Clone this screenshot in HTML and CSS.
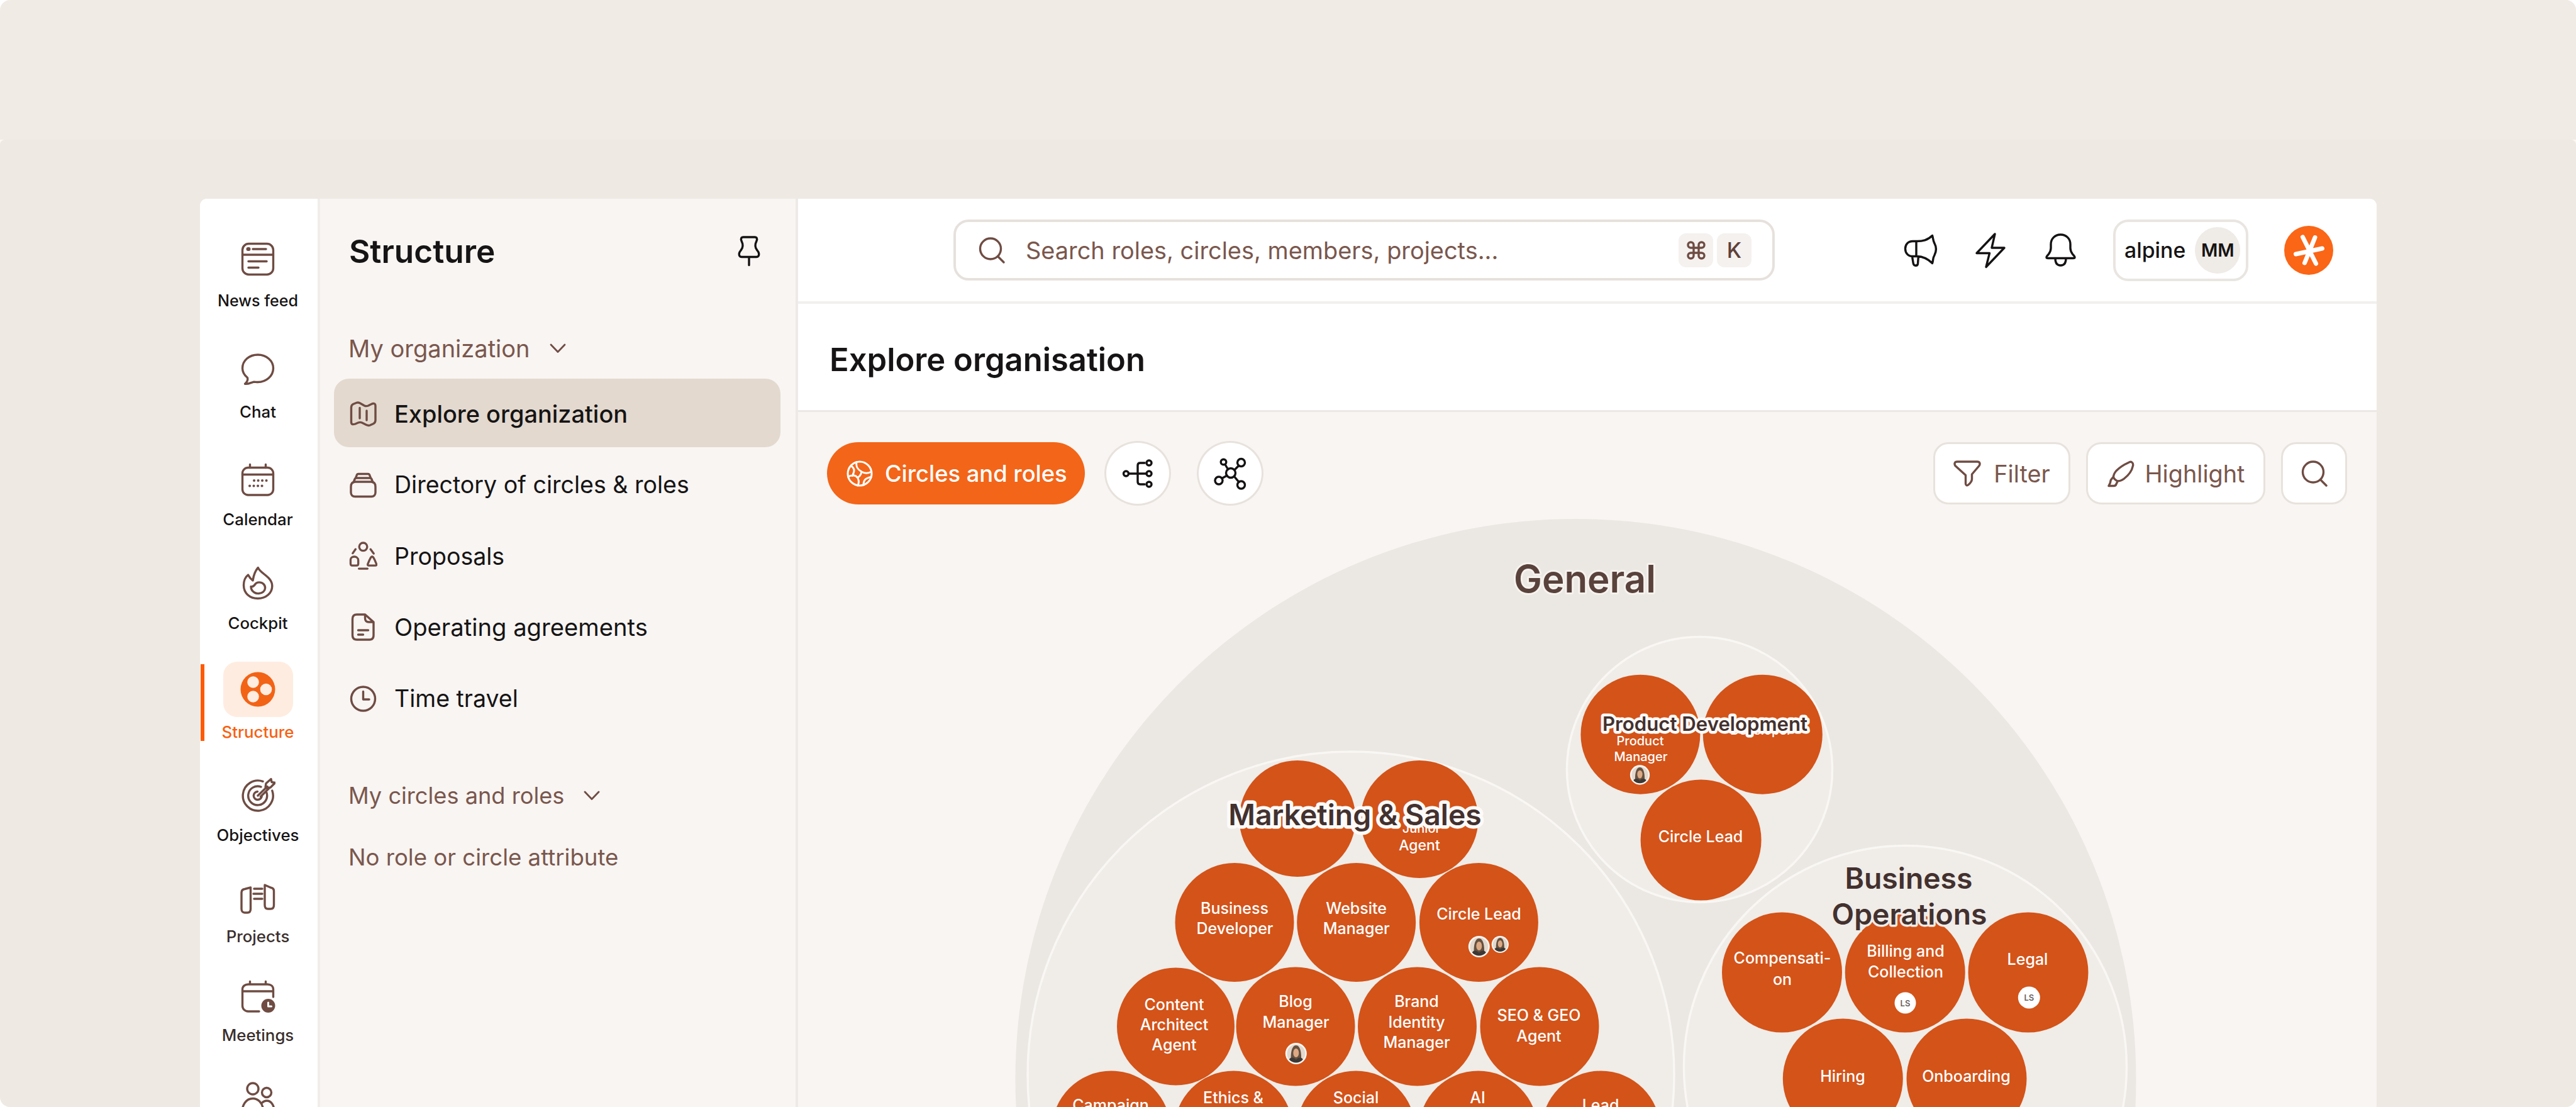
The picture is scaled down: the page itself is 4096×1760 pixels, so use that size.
FILE: index.html
```
<!DOCTYPE html>
<html lang="en">
<head>
    <meta charset="UTF-8">
    <meta name="viewport" content="width=device-width, initial-scale=1.0">
    <title>Explore organisation</title>
    <link rel="stylesheet" href="styles.css">
</head>
<body>
<div class="page">
    <div class="stage">
        <div class="app">

            <!-- icon rail -->
            <nav class="rail">
                <a class="rail-item">
                    <svg class="icon" width="56" height="56" viewBox="0 0 56 56"><rect x="3.500" y="3.500" width="49" height="49" rx="10"/><path d="M3.500 21h49M20 12h21M13 31.500h29M13 41.500h16"/><path class="thick" d="M12.500 12h1"/></svg>
                    <span>News feed</span>
                </a>
                <a class="rail-item">
                    <svg class="icon" width="56" height="56" viewBox="0 0 56 56"><path d="M11.500 40.500C6 36 3.500 31 3.500 25.500 3.500 13 14.500 4 28 4s24.500 9.500 24.500 21.500S41.500 47.500 28 47.500c-3 0-5-.5-7-.2-4 .8-8 3.700-13.500 2.900 3-2.500 5-6.200 4-9.700z"/></svg>
                    <span>Chat</span>
                </a>
                <a class="rail-item">
                    <svg class="icon" width="56" height="56" viewBox="0 0 56 56"><rect x="3.500" y="8.500" width="49" height="43.500" rx="9"/><path d="M3.500 19.500h49M15.500 3.500v5M40.500 3.500v5"/><path class="dots" d="M22 29h22M15 37.500h22"/></svg>
                    <span>Calendar</span>
                </a>
                <a class="rail-item">
                    <svg class="icon" width="56" height="56" viewBox="0 0 56 56"><path d="M28.300 3.500c3 9 22.500 14.500 22.500 29C50.800 44 41 52.500 28 52.500S5.500 44 5.500 31.500c0-7 2.500-13 7-16.500 2 4 4.500 6.500 7.500 9 1-7 3-14.500 8.300-20.500z"/><path d="M17 33.500c3 1 5-1 7-4s9-4 13 0 3 9.500-.5 12.500-10 3.500-14 1-5.500-5.500-5.500-9.500z"/></svg>
                    <span>Cockpit</span>
                </a>
                <a class="rail-item active">
                    <div class="tile">
                        <svg width="56" height="56" viewBox="0 0 56 56"><circle cx="28" cy="28" r="27.500" fill="#f26316"/><g fill="#ffece0"><circle cx="20.500" cy="16.500" r="9.300"/><circle cx="41" cy="28" r="9.300"/><circle cx="20.500" cy="39.500" r="9.300"/></g></svg>
                    </div>
                    <span>Structure</span>
                </a>
                <a class="rail-item">
                    <svg class="icon" width="56" height="56" viewBox="0 0 56 56"><path d="M36 6.300A24 24 0 1 0 50.800 21"/><path d="M33 15A15 15 0 1 0 41.800 24"/><path d="M27.500 22.500A6.500 6.500 0 1 0 34.300 29"/><path d="M28 29L43 14.500M32.500 30.500L46 17M40 16l1-6.500 8-7 1 5 5.500 1-7.500 7.500-7 1z"/></svg>
                    <span>Objectives</span>
                </a>
                <a class="rail-item">
                    <svg class="icon" width="56" height="56" viewBox="0 0 56 56"><path d="M2 18c0-3 2-5 5-5.500L16.500 10v34c0 4-2 6-5 6H7c-3 0-5-2-5-6zM39 6l9 4c3 .5 5.500 2.500 5.500 5.500V38c0 4-2 6-5 6H44c-3 0-5-2-5-6z"/><path d="M22 12h13M21 20h14M22 28h13"/></svg>
                    <span>Projects</span>
                </a>
                <a class="rail-item">
                    <svg class="icon" width="56" height="56" viewBox="0 0 56 56"><path d="M30 51H12.500c-5 0-9-4-9-9V16c0-5 4-8 9-8h31c5 0 9 3 9 8v12M3.500 19h49M15.500 3.500V8M40.500 3.500V8"/><circle class="solid" cx="44.500" cy="42" r="11"/><path class="hand" d="M44.500 37v6h5"/></svg>
                    <span>Meetings</span>
                </a>
                <a class="rail-item">
                    <svg class="icon" width="56" height="56" viewBox="0 0 56 56"><circle cx="20" cy="15" r="9"/><circle cx="42" cy="21" r="7.500"/><path d="M2.500 56c0-16 7-25.500 17.500-25.500 8 0 14.500 6 16.500 16.500M35 37c2-2 4.500-3 7-3 7 0 12 7 12 17"/></svg>
                </a>
            </nav>

            <!-- structure sidebar -->
            <aside class="sidebar">
                <div class="sidebar-header">
                    <h2>Structure</h2>
                    <svg class="icon dark" width="50" height="50" viewBox="0 0 50 50"><path d="M16 3h18c3.500 0 4.500 3 3 6-3 6-3 10.500 1 15 2.500 3 3.500 5 2.500 8-.5 1.500-2 2.500-4 2.500h-23c-2 0-3.500-1-4-2.500-1-3 0-5 2.500-8 4-4.500 4-9 1-15-1.500-3-.5-6 3-6zM25 35v12.500"/></svg>
                </div>
                <div class="section-title">
                    <span>My organization</span>
                    <svg class="icon thin" width="26" height="26" viewBox="0 0 26 26"><path d="M2 7l11 11.500L24 7"/></svg>
                </div>
                <ul class="menu">
                    <li class="selected">
                        <svg class="icon" width="44" height="44" viewBox="0 0 44 44"><path d="M3 12c0-3 1-4.500 3-5.500l5-2c2.500-1 4-.5 6 .5l7 4c2 1 3.500 1 6 0l5-2.500c4-2 6.500-1 6.500 3V32c0 3-1 4.500-3 5.500l-5.500 2.500c-2.500 1-4 .5-6-.5l-7-3.500c-2-1-3.500-1-6 0l-4.500 2C5 39.500 3 38.500 3 35zM16.500 12.500v16.500M27.500 17v15"/></svg>
                        <span>Explore organization</span>
                    </li>
                    <li>
                        <svg class="icon" width="44" height="44" viewBox="0 0 44 44"><path d="M9.500 17h25c4.500 0 7 3 7 8v9c0 4-2.500 6.500-6.500 6.500H9c-4 0-6.500-2.500-6.500-6.500v-9c0-5 2.500-8 7-8zM6.500 18l2-5c.5-1.500 1.500-2 3-2h21c1.500 0 2.500.5 3 2l2 5M10 11l1.500-4c.5-2 1.500-2.500 3-2.500h15c1.500 0 2.500.5 3 2.500L34 11"/></svg>
                        <span>Directory of circles &amp; roles</span>
                    </li>
                    <li>
                        <svg class="icon" width="46" height="46" viewBox="0 0 46 46"><circle cx="23" cy="8" r="6.500"/><path d="M2.500 29c0-3 3-5 6-5s6.500 2 6.500 6v5.500c0 2-1 3-3 3H5c-1.500 0-2.500-1-2.500-3zM37.500 24c2 0 3 3 4.500 6l2.500 6c.5 1.500 0 2.500-2 2.500h-10c-2 0-2.500-1-2-2.500l2.500-6c1.500-3 2.500-6 4.500-6zM10.500 12L6 18.500M35 12l5 7M16 43.500h14"/></svg>
                        <span>Proposals</span>
                    </li>
                    <li>
                        <svg class="icon" width="44" height="44" viewBox="0 0 44 44"><path d="M12 2h13l13.500 12v21c0 4.500-2 7-6.500 7H12c-4.500 0-7-2.500-7-7V9c0-4.500 2.500-7 7-7zM25 2v6c0 4 2 6 6 6h7.500M14 27h16M14 34h8"/></svg>
                        <span class="wide">Operating agreements</span>
                    </li>
                    <li>
                        <svg class="icon" width="44" height="44" viewBox="0 0 44 44"><circle cx="22" cy="22" r="19"/><path d="M22 10.500V23h9.500"/></svg>
                        <span>Time travel</span>
                    </li>
                </ul>
                <div class="section-title second">
                    <span>My circles and roles</span>
                    <svg class="icon thin" width="26" height="26" viewBox="0 0 26 26"><path d="M2 7l11 11.500L24 7"/></svg>
                </div>
                <p class="empty-note">No role or circle attribute</p>
            </aside>

            <!-- main column -->
            <main class="main">
                <header class="topbar">
                    <div class="search">
                        <svg class="icon" width="44" height="44" viewBox="0 0 44 44"><circle cx="20" cy="19.500" r="16.500"/><path d="M31.500 31.500L41 41"/></svg>
                        <span class="placeholder">Search roles, circles, members, projects...</span>
                        <span class="key"><svg class="icon" width="32" height="32" viewBox="0 0 32 32"><path d="M12 12h8v8h-8zM12 12H7.500A4.500 4.500 0 1 1 12 7.500zM20 12V7.500a4.500 4.500 0 1 1 4.500 4.500zM20 20h4.500a4.500 4.500 0 1 1-4.500 4.500zM12 20v4.500A4.500 4.500 0 1 1 7.500 20z"/></svg></span>
                        <span class="key">K</span>
                    </div>
                    <div class="actions">
                        <svg class="icon dark" width="60" height="60" viewBox="0 0 60 60"><path d="M23 15.500h-5.500C10 15.500 5.500 20.500 5.500 27.500S10 39.500 17.500 39.500H23c9.500 0 17 2.500 25.500 11 1.500-4 .5-8 3.500-13 3-6 3-13 0-18.500-2.500-4-2-8-3.500-12.500C41 14 33 15.500 23 15.500v24M16.500 40l1.700 10.500c.8 5 6.800 5 7.300.5l.8-10.500"/></svg>
                        <svg class="icon dark" width="60" height="60" viewBox="0 0 60 60"><path d="M37 4L8 34.500h20.500L23 56.500l29-30.500H32z"/></svg>
                        <svg class="icon dark" width="60" height="60" viewBox="0 0 60 60"><path d="M30.500 5c-9 0-15.500 6.500-15.500 15.500v6c0 4.500-1 6-3.500 9.500-2 2.500-3.500 3.500-3.500 5 0 1 1 1.500 2.500 1.500h40c1.500 0 2.500-.5 2.500-1.500 0-1.500-1.500-2.500-3.500-5C47 32.500 46 31 46 26.500v-6C46 11.500 39.500 5 30.500 5zM22 42.500C22 50 25 54 30.500 54S39 50 39 42.500"/></svg>
                    </div>
                    <div class="workspace">
                        <span>alpine</span>
                        <span class="initials">MM</span>
                    </div>
                    <svg class="logo" width="78" height="78" viewBox="0 0 78 78"><circle cx="39" cy="39" r="39" fill="#fb6516"/><path d="M29.500 18l21 42M49 18.500L32.500 59M18.500 45l42-9" fill="none" stroke="#fff" stroke-width="7" stroke-linecap="round"/></svg>
                </header>
                <div class="titlebar">
                    <h1>Explore organisation</h1>
                </div>

                <section class="canvas">
                    <!-- circle map, drawn behind the toolbar -->
                    <svg class="map" viewBox="1269 655 2510 1105">
                        <defs>
                            <g id="photo">
                                <circle r="17" fill="#fbf7f3"/>
                                <circle r="14.500" fill="#e3d8cd"/>
                                <path d="M-8 12C-9 0-7-13 0-13S9 0 8 12z" fill="#66503f"/>
                                <ellipse cy="-1" rx="4.500" ry="7" fill="#dba984"/>
                                <path d="M-11 9.500C-9 5-3 6 0 10c3-4 9-5 11-.5C8 13 4 14.500 0 14.500S-8 13-11 9.500z" fill="#3c3836"/>
                            </g>
                        </defs>

                        <circle class="root" cx="2505.500" cy="1716" r="891"/>
                        <circle class="group" cx="2702.500" cy="1223.500" r="211"/>
                        <circle class="group" cx="3029.500" cy="1696.500" r="352"/>
                        <circle class="group" cx="2148" cy="1709" r="514"/>

                        <g class="roles">
                            <!-- product development -->
                            <circle cx="2608.400" cy="1167.700" r="95"/>
                            <circle cx="2802.800" cy="1167.700" r="95"/>
                            <circle cx="2704.600" cy="1335.500" r="96"/>
                            <!-- business operations -->
                            <circle cx="2833.500" cy="1546" r="95.500"/>
                            <circle cx="3029.200" cy="1546" r="95.500"/>
                            <circle cx="3225" cy="1546" r="95.500"/>
                            <circle cx="2930.300" cy="1715" r="95.500"/>
                            <circle cx="3127" cy="1715" r="95.500"/>
                            <!-- marketing & sales -->
                            <circle cx="2063" cy="1301.500" r="92.500"/>
                            <circle cx="2257" cy="1302.500" r="93.500"/>
                            <circle cx="1963" cy="1466.500" r="94.500"/>
                            <circle cx="2156.700" cy="1466.500" r="94.500"/>
                            <circle cx="2351.400" cy="1466.500" r="94.500"/>
                            <circle cx="1869.500" cy="1632" r="93.500"/>
                            <circle cx="2060" cy="1632" r="94.500"/>
                            <circle cx="2253.500" cy="1632" r="94.500"/>
                            <circle cx="2448" cy="1632" r="94.500"/>
                            <circle cx="1767" cy="1797" r="94.500"/>
                            <circle cx="1961.500" cy="1797" r="94.500"/>
                            <circle cx="2156" cy="1797" r="94.500"/>
                            <circle cx="2350.500" cy="1797" r="94.500"/>
                            <circle cx="2545.500" cy="1797" r="94.500"/>
                        </g>

                        <g class="labels">
                            <g class="small">
                                <text x="2608" y="1185">Product</text>
                                <text x="2609" y="1210">Manager</text>
                                <text x="2800" y="1168">Developer</text>
                                <text x="2260" y="1324">Junior</text>
                            </g>
                            <text x="2257" y="1351.500" class="mid">Agent</text>
                            <text x="2704" y="1339">Circle Lead</text>

                            <text x="2834" y="1532">Compensati-</text>
                            <text x="2834" y="1565.500">on</text>
                            <text x="3030" y="1521">Billing and</text>
                            <text x="3030" y="1553.500">Collection</text>
                            <text x="3224" y="1534">Legal</text>
                            <text x="2930" y="1720">Hiring</text>
                            <text x="3126.500" y="1720">Onboarding</text>

                            <text x="1963" y="1452.800">Business</text>
                            <text x="1963.500" y="1485">Developer</text>
                            <text x="2156.700" y="1452.800">Website</text>
                            <text x="2156.700" y="1485">Manager</text>
                            <text x="2351.500" y="1462">Circle Lead</text>
                            <text x="1867" y="1605.500">Content</text>
                            <text x="1867" y="1637.700">Architect</text>
                            <text x="1867" y="1670">Agent</text>
                            <text x="2060" y="1601">Blog</text>
                            <text x="2060.500" y="1634">Manager</text>
                            <text x="2252.500" y="1601">Brand</text>
                            <text x="2252.500" y="1633.500">Identity</text>
                            <text x="2252.500" y="1666">Manager</text>
                            <text x="2447" y="1622.500">SEO &amp; GEO</text>
                            <text x="2447" y="1655.500">Agent</text>
                            <text x="1766" y="1765.500">Campaign</text>
                            <text x="1961" y="1753.500">Ethics &amp;</text>
                            <text x="2156" y="1753.500">Social</text>
                            <text x="2349.500" y="1753.500">AI</text>
                            <text x="2545" y="1765.500">Lead</text>
                        </g>

                        <use href="#photo" transform="translate(2607.500 1232) scale(.92)"/>
                        <use href="#photo" transform="translate(2351.800 1505)"/>
                        <use href="#photo" transform="translate(2385.300 1501.500) scale(.8)"/>
                        <use href="#photo" transform="translate(2060.800 1675)"/>
                        <g class="badges">
                            <circle cx="3029.500" cy="1594.500" r="17"/>
                            <circle cx="3226.300" cy="1586" r="17.500"/>
                            <text x="3029.500" y="1599.500">LS</text>
                            <text x="3226.300" y="1591">LS</text>
                        </g>

                        <g class="headings">
                            <text class="general" x="2520" y="942">General</text>
                            <text class="product" x="2711" y="1162">Product Development</text>
                            <text x="2154.500" y="1311.500">Marketing &amp; Sales</text>
                            <text class="plain" x="3035" y="1412.500">Business</text>
                            <text class="plain" x="3036" y="1470">Operations</text>
                        </g>
                    </svg>

                    <div class="toolbar">
                        <button class="pill">
                            <svg width="44" height="44" viewBox="0 0 44 44"><circle cx="22" cy="22" r="19"/><path d="M17 3.500c-1.500 8 2 12 8 15.500 5 3 10 3 15.500 0M3.500 27c6-3.500 12-3 15 1.500 2.500 4 2.500 8 .5 12.500M18.500 28.500c3.500-2 5.500-5 6.500-9.500M8 9.500c4 2.500 6 6 4.500 10.500-.8 2.500-1.500 4-2 5.500M28 40c0-4 1-8 4.500-10s5-2.500 7.500-2.500"/></svg>
                            <span>Circles and roles</span>
                        </button>
                        <button class="round">
                            <svg class="icon dark" width="50" height="50" viewBox="0 0 50 50"><circle cx="6.500" cy="25" r="4"/><circle cx="43" cy="8" r="4"/><circle cx="43" cy="25" r="4"/><circle cx="43" cy="42" r="4"/><path d="M11 25h28M36 8h-7c-3 0-4 1.500-4 4v26c0 2.500 1 4 4 4h7"/></svg>
                        </button>
                        <button class="round second">
                            <svg class="icon dark" width="54" height="54" viewBox="0 0 54 54"><circle cx="28" cy="26" r="7.500"/><circle cx="16.500" cy="8.500" r="4.300"/><circle cx="44.500" cy="9.500" r="6"/><circle cx="9" cy="38" r="6"/><circle cx="44.500" cy="45" r="6"/><path d="M19 12.500l4.500 7.500M40.500 14.500L34 21M14 34.500l8-4.500M33.500 31.500l7.500 9"/></svg>
                        </button>
                        <div class="tools">
                            <button class="tool filter">
                                <svg class="icon" width="44" height="44" viewBox="0 0 44 44"><path d="M6 3h32c4 0 5 3.500 3 6.500L29.500 23v7.500c0 4-3 7-6 9.500-2 1.500-4 .5-4-2V24.500L3 9.500C1 6.500 2 3 6 3z"/></svg>
                                <span>Filter</span>
                            </button>
                            <button class="tool highlight">
                                <svg class="icon" width="44" height="44" viewBox="0 0 44 44"><path d="M34.500 4.500c4-3 8 0 7 5C40 17 34 25 27.500 30c-4 3-7 4-10.500 4-3-1.500-5.500-3.500-6.500-6.500C10.500 24 12 21 15 17.500c5-5 11.500-9.500 19.500-13zM10 27.500L6.500 32c-1 2-.5 3.500-1.500 5.500l-2 4h8c2 0 3.500-1 4-3l2-4"/></svg>
                                <span>Highlight</span>
                            </button>
                            <button class="tool find">
                                <svg class="icon" width="44" height="44" viewBox="0 0 44 44"><circle cx="20" cy="19.500" r="16.500"/><path d="M31.500 31.500L41 41"/></svg>
                            </button>
                        </div>
                    </div>
                </section>
            </main>
        </div>
    </div>
</div>
</body>
</html>
```
FILE: styles.css
```
* {
    box-sizing: border-box;
}

body {
    margin: 0;
    background-color: #fff;
    font-family: Inter, "Liberation Sans", sans-serif;
    color: #161414;
}

h1, h2, p, ul {
    margin: 0;
    padding: 0;
}

button {
    font-family: inherit;
    padding: 0;
    margin: 0;
}

.page {
    height: 1760px;
    padding-top: 222px;
    border-radius: 16px;
    overflow: hidden;
    background: linear-gradient(#f0ebe4 222px, #fdf8f2 222px);
}

.stage {
    height: 1538px;
    padding: 94px 317px 0 318px;
    border-radius: 8px 8px 0 0;
    background-color: #eee9e2;
}

.app {
    display: flex;
    height: 1444px;
    border-radius: 11px 11px 0 0;
    overflow: hidden;
    background-color: #fff;
}

.icon {
    flex: none;
    fill: none;
    stroke: #6f4c43;
    stroke-width: 3.4;
    stroke-linecap: round;
    stroke-linejoin: round;
}

.icon.dark {
    stroke: #141212;
}

.icon .thick {
    stroke-width: 6;
}

.icon .dots {
    stroke-width: 4;
    stroke-dasharray: 0.1 6.4;
}

.icon .solid {
    fill: #6f4c43;
    stroke: none;
}

.icon .hand {
    stroke: #fff;
    stroke-width: 3;
}

/* icon rail */
.rail {
    flex: none;
    display: flex;
    flex-direction: column;
    width: 187px;
    padding-top: 68px;
    background-color: #fff;
}

.rail-item {
    flex: none;
    display: flex;
    flex-direction: column;
    align-items: center;
    gap: 22px;
    width: 184px;
    height: 176px;
    font-size: 25.8px;
    font-weight: 450;
    line-height: 30px;
}

.rail-item:nth-child(1) {
    gap: 23px;
    font-size: 25.1px;
}

.rail-item:nth-child(2) {
    height: 175px;
    gap: 24px;
}

.rail-item:nth-child(3) {
    height: 164px;
    gap: 20px;
}

.rail-item:nth-child(4) {
    height: 153px;
    gap: 21px;
}

.rail-item:nth-child(6) {
    height: 165px;
    gap: 21px;
}

.rail-item:nth-child(7) {
    height: 156px;
    gap: 17px;
    color: #3a2e2c;
}

.rail-item:nth-child(8) {
    height: 159px;
    gap: 18px;
    color: #3a2e2c;
}

.rail-item.active {
    height: 184px;
    gap: 9px;
    color: #f8600f;
    background: linear-gradient(#ff5a00, #ff5a00) 1px 4px / 6px 122px no-repeat;
}

.tile {
    display: flex;
    align-items: center;
    justify-content: center;
    width: 111px;
    height: 88px;
    border-radius: 22px;
    background-color: #ffece0;
}

/* sidebar */
.sidebar {
    flex: none;
    width: 764px;
    padding: 0 24px 0 22px;
    border-left: 4px solid #f0edeb;
    border-right: 4px solid #edeae7;
    background-color: #f8f5f3;
}

.sidebar-header {
    display: flex;
    align-items: center;
    justify-content: space-between;
    height: 164px;
    padding: 2px 25px 0 24px;
}

.sidebar-header h2 {
    font-size: 51.3px;
    font-weight: 600;
}

.section-title {
    display: flex;
    align-items: center;
    gap: 31px;
    height: 98px;
    margin-top: 24px;
    padding: 2px 0 0 23px;
    font-size: 38px;
    color: #7a574d;
}

.section-title.second {
    margin-top: 51px;
    font-size: 36.2px;
}

.icon.thin {
    stroke-width: 2.8;
}

.menu {
    display: flex;
    flex-direction: column;
    gap: 4.300px;
    list-style: none;
}

.menu li {
    display: flex;
    align-items: center;
    gap: 27px;
    height: 109px;
    padding: 2px 0 0 24px;
    border-radius: 24px;
    font-size: 37.5px;
}

.menu li svg {
    width: 45px;
}

.menu li.selected {
    background-color: #e3d9cf;
    font-size: 37.9px;
    font-weight: 500;
}

.menu .wide {
    font-size: 38.2px;
}

.empty-note {
    margin-top: 20px;
    padding-left: 23px;
    font-size: 36.6px;
    line-height: 60px;
    color: #7a574d;
}

/* top bar */
.main {
    flex: 1;
    display: flex;
    flex-direction: column;
}

.topbar {
    flex: none;
    display: flex;
    align-items: center;
    height: 167px;
    padding: 0 69px 0 247px;
    border-bottom: 4px solid #f2f0ef;
}

.search {
    display: flex;
    align-items: center;
    width: 1306px;
    height: 97px;
    padding: 0 33px 0 35px;
    border: 4px solid #e6e1dc;
    border-radius: 24px;
    color: #7a574d;
}

.placeholder {
    flex: 1;
    margin-left: 32px;
    font-size: 37.9px;
}

.key {
    display: flex;
    align-items: center;
    justify-content: center;
    width: 55px;
    height: 54px;
    margin-left: 6px;
    border-radius: 12px;
    background-color: #f4f1ef;
    color: #5f4039;
    font-size: 34px;
    font-weight: 500;
}

.actions {
    display: flex;
    gap: 51px;
    margin-left: auto;
}

.workspace {
    display: flex;
    align-items: center;
    gap: 15px;
    width: 215px;
    height: 98px;
    margin: 0 57px 0 54px;
    padding-left: 14px;
    border: 4px solid #e9e5e0;
    border-radius: 24px;
    font-size: 33.8px;
    font-weight: 500;
}

.initials {
    display: flex;
    align-items: center;
    justify-content: center;
    width: 72px;
    height: 74px;
    border-radius: 50%;
    background-color: #efebe7;
    font-size: 28.6px;
    font-weight: 600;
}

.titlebar {
    flex: none;
    display: flex;
    align-items: center;
    height: 172px;
    padding: 8px 0 0 50px;
    border-bottom: 3px solid #ece8e5;
}

.titlebar h1 {
    font-size: 50.700px;
    font-weight: 600;
}

/* canvas */
.canvas {
    position: relative;
    flex: 1;
    background-color: #f8f5f3;
}

.toolbar {
    position: relative;
    display: flex;
    align-items: center;
    height: 105px;
    margin-top: 45px;
    padding: 0 47px 0 46px;
}

.pill {
    display: flex;
    align-items: center;
    gap: 18px;
    width: 410px;
    height: 99px;
    padding-left: 30px;
    border: none;
    border-radius: 50px;
    background-color: #f36518;
    color: #fff;
    font-size: 36.3px;
    font-weight: 450;
}

.pill svg {
    fill: none;
    stroke: #fff;
    stroke-width: 3;
    stroke-linecap: round;
}

.round {
    display: flex;
    align-items: center;
    justify-content: center;
    width: 106px;
    height: 103px;
    margin-left: 31px;
    border: 3px solid #e8e2dc;
    border-radius: 50%;
    background-color: #fff;
}

.round.second {
    margin-left: 41px;
}

.tools {
    display: flex;
    gap: 25px;
    margin-left: auto;
}

.tool {
    display: flex;
    align-items: center;
    justify-content: center;
    gap: 20px;
    height: 99px;
    border: 3px solid #e8e2dc;
    border-radius: 24px;
    background-color: #fff;
    color: #7a574d;
    font-size: 37.8px;
}

.filter {
    width: 218px;
}

.highlight {
    width: 285px;
    gap: 17px;
}

.find {
    width: 105px;
}

/* circle map */
.map {
    position: absolute;
    left: 0;
    top: 0;
    width: 2510px;
    height: 1105px;
}

.root {
    fill: #ebe7e2;
}

.group {
    fill: #f0ece8;
    stroke: #f9f7f4;
    stroke-width: 3.5;
}

.roles circle {
    fill: #d35319;
}

.labels text {
    fill: #fff;
    font-size: 25px;
    font-weight: 450;
    text-anchor: middle;
}

.labels .small text {
    font-size: 20px;
}

.labels .mid {
    font-size: 23px;
}

.badges circle {
    fill: #fff;
}

.badges text {
    fill: #6b625e;
    font-size: 13px;
    font-weight: 600;
    text-anchor: middle;
}

.headings text {
    fill: #43312f;
    stroke: #fdfaf8;
    stroke-width: 11;
    stroke-linejoin: round;
    paint-order: stroke;
    font-size: 46.3px;
    font-weight: 600;
    text-anchor: middle;
}

.headings .general {
    fill: #5a423c;
    stroke: #f6f2ee;
    stroke-width: 6;
    font-size: 60px;
}

.headings .product {
    stroke-width: 9;
    font-size: 31.2px;
}

.headings .plain {
    stroke: #f0ece8;
    stroke-width: 7;
}
```
